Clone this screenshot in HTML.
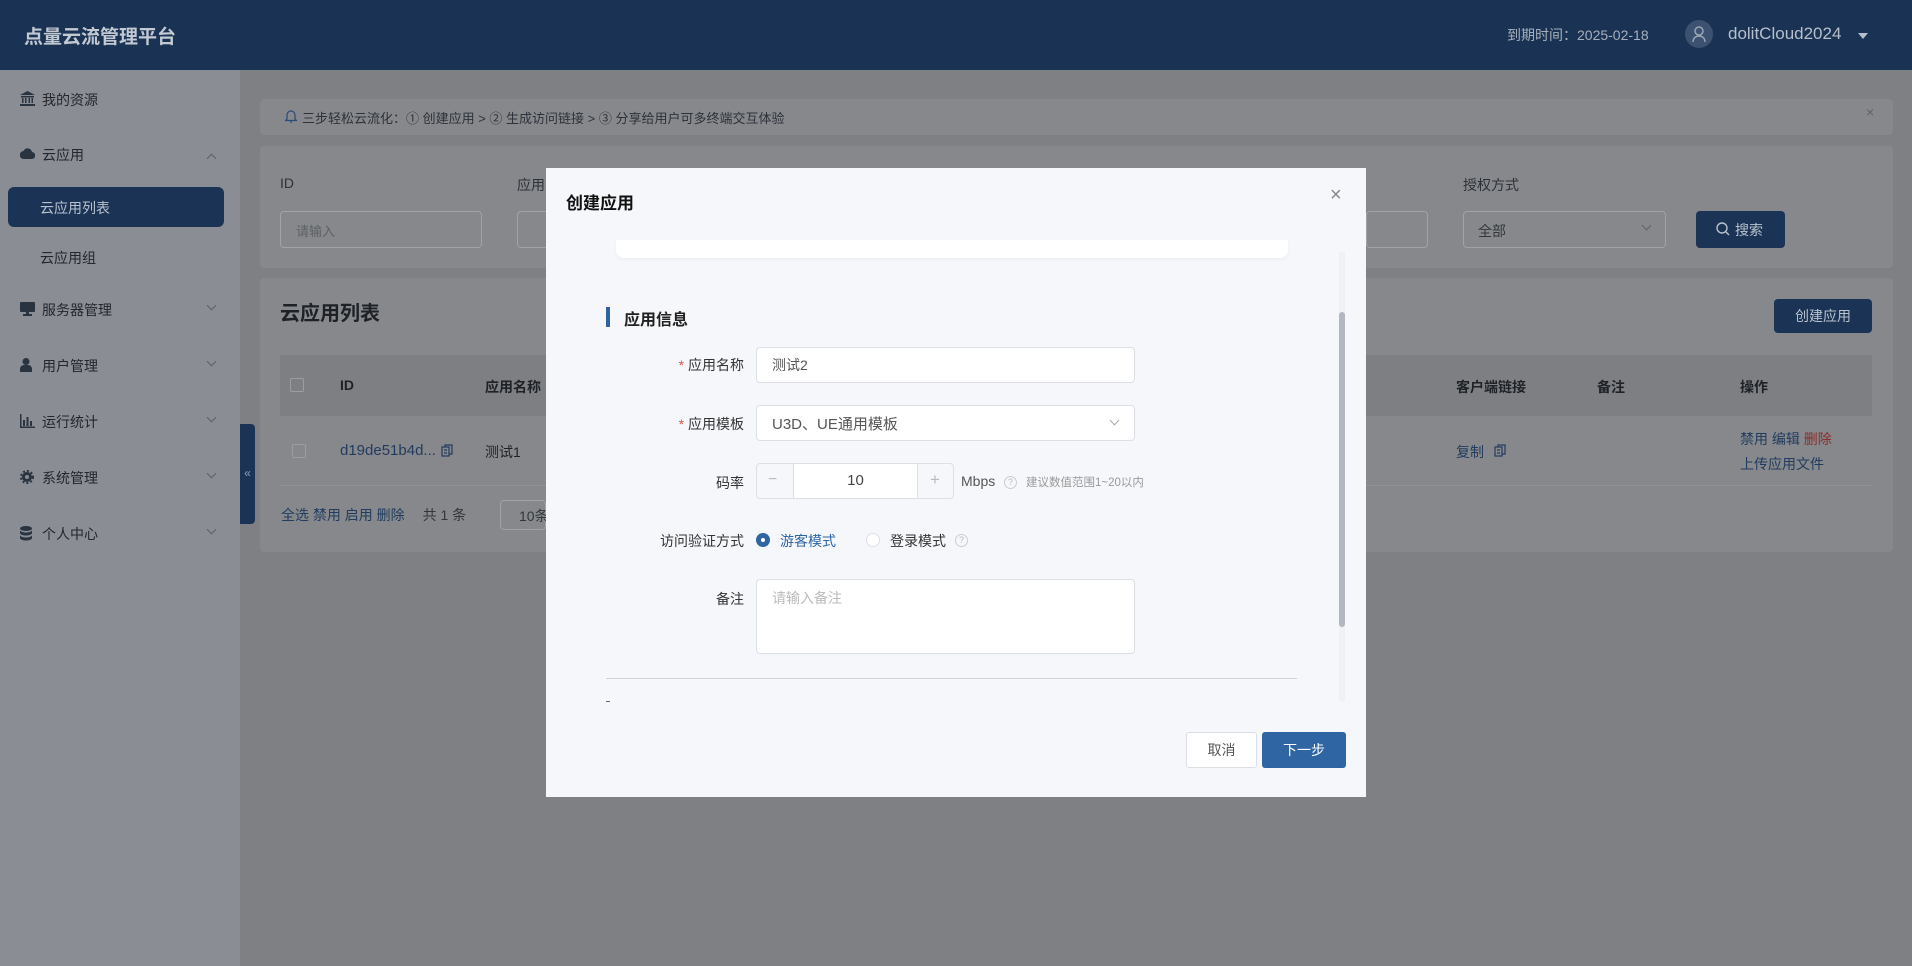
<!DOCTYPE html>
<html><head><meta charset="utf-8"><style>
*{box-sizing:border-box;margin:0;padding:0}
body{width:1912px;height:966px;overflow:hidden;background:#7e8083;font-family:"Liberation Sans","Noto Sans CJK SC",sans-serif;position:relative;font-size:14px;color:#2b2f35}
.a{position:absolute;white-space:nowrap}
.hdr{left:0;top:0;width:1912px;height:70px;background:#1a3354}
.side{left:0;top:70px;width:240px;height:896px;background:#8a8e94}
.card{background:#86888b;border-radius:4px}
.mi{left:42px;font-size:14px;color:#23272d}
.ic{position:absolute;left:20px}
.chev{left:208px;width:7px;height:7px;border-right:1px solid #5c6068;border-bottom:1px solid #5c6068;transform:rotate(45deg)}
.inp{border:1px solid #a0a3a7;border-radius:4px;background:#86888b}
.dlg{left:546px;top:168px;width:820px;height:629px;background:#f5f7fb}
.lbl{font-size:14px;color:#333;text-align:right;width:200px}
.fi{background:#fff;border:1px solid #dcdfe6;border-radius:4px}
</style></head><body>
<div class="a hdr"></div>
<div class="a" style="left:24px;top:22px;font-size:19px;font-weight:bold;color:#c3c9d2">点量云流管理平台</div>
<div class="a" style="left:1507px;top:25px;font-size:14px;color:#a6afbb">到期时间：2025-02-18</div>
<div class="a" style="left:1685px;top:20px;width:28px;height:28px;border-radius:50%;background:#3c5270"></div>
<svg class="a" style="left:1691px;top:25px" width="16" height="18" viewBox="0 0 16 18"><circle cx="8" cy="6" r="4" fill="none" stroke="#9aa6b6" stroke-width="1.5"/><path d="M2 17c0-4 3-6 6-6s6 2 6 6" fill="none" stroke="#9aa6b6" stroke-width="1.5"/></svg>
<div class="a" style="left:1728px;top:24px;font-size:17px;color:#b6bfcb">dolitCloud2024</div>
<div class="a" style="left:1858px;top:33px;border-left:5px solid transparent;border-right:5px solid transparent;border-top:6px solid #b6bfcb"></div>

<div class="a side"></div>
<svg class="ic" style="top:91px" width="15" height="15" viewBox="0 0 15 15" fill="#2a3340"><path d="M7.5 0L0 4h15z"/><rect x="1" y="5" width="13" height="1.5"/><rect x="2" y="7" width="1.5" height="5"/><rect x="5" y="7" width="1.5" height="5"/><rect x="8.5" y="7" width="1.5" height="5"/><rect x="11.5" y="7" width="1.5" height="5"/><rect x="0" y="13" width="15" height="2"/></svg>
<div class="a mi" style="top:90px">我的资源</div>
<svg class="ic" style="top:148px" width="15" height="11" viewBox="0 0 15 11" fill="#2a3340"><path d="M4 11a4 4 0 0 1-.5-8A4.5 4.5 0 0 1 12 4a3.5 3.5 0 0 1-.5 7z"/></svg>
<div class="a mi" style="top:145px">云应用</div>
<div class="a chev" style="top:155px;transform:rotate(225deg)"></div>
<div class="a" style="left:8px;top:187px;width:216px;height:40px;background:#1b3354;border-radius:6px"></div>
<div class="a" style="left:40px;top:198px;font-size:14px;color:#b9c2cf">云应用列表</div>
<div class="a" style="left:40px;top:248px;font-size:14px;color:#23272d">云应用组</div>
<svg class="ic" style="top:302px" width="15" height="14" viewBox="0 0 15 14" fill="#2a3340"><rect x="0" y="0" width="15" height="10" rx="1"/><rect x="6" y="10" width="3" height="2"/><rect x="3" y="12" width="9" height="2"/></svg>
<div class="a mi" style="top:300px">服务器管理</div><div class="a chev" style="top:302px"></div>
<svg class="ic" style="top:358px" width="12" height="14" viewBox="0 0 12 14" fill="#2a3340"><circle cx="6" cy="3.5" r="3.5"/><path d="M0 14v-3a4 4 0 0 1 4-4h4a4 4 0 0 1 4 4v3z"/></svg>
<div class="a mi" style="top:356px">用户管理</div><div class="a chev" style="top:358px"></div>
<svg class="ic" style="top:414px" width="15" height="14" viewBox="0 0 15 14" fill="#2a3340"><rect x="0" y="0" width="1.5" height="14"/><rect x="0" y="12.5" width="15" height="1.5"/><rect x="3" y="6" width="2" height="6"/><rect x="6.5" y="3" width="2" height="9"/><rect x="10" y="7" width="2" height="5"/></svg>
<div class="a mi" style="top:412px">运行统计</div><div class="a chev" style="top:414px"></div>
<svg class="ic" style="top:470px" width="14" height="14" viewBox="0 0 14 14"><circle cx="7" cy="7" r="5" fill="#2a3340"/><circle cx="7" cy="7" r="6" fill="none" stroke="#2a3340" stroke-width="2" stroke-dasharray="2 2"/><circle cx="7" cy="7" r="2" fill="#8a8e94"/></svg>
<div class="a mi" style="top:468px">系统管理</div><div class="a chev" style="top:470px"></div>
<svg class="ic" style="top:526px" width="12" height="15" viewBox="0 0 12 15" fill="#2a3340"><ellipse cx="6" cy="2.5" rx="6" ry="2.5"/><path d="M0 4v3c0 1.4 2.7 2.5 6 2.5S12 8.4 12 7V4c0 1.4-2.7 2.5-6 2.5S0 5.4 0 4zM0 9v3c0 1.4 2.7 2.5 6 2.5S12 13.4 12 12V9c0 1.4-2.7 2.5-6 2.5S0 10.4 0 9z"/></svg>
<div class="a mi" style="top:524px">个人中心</div><div class="a chev" style="top:526px"></div>
<div class="a" style="left:240px;top:424px;width:15px;height:100px;background:#1b3354;border-radius:0 4px 4px 0;color:#8fa0b8;font-size:12px;padding-top:42px;text-align:center">«</div>

<div class="a card" style="left:260px;top:99px;width:1633px;height:36px"></div>
<svg class="a" style="left:285px;top:109px" width="12" height="14" viewBox="0 0 12 14" fill="none" stroke="#2a4a78" stroke-width="1.2"><path d="M2 10V6a4 4 0 0 1 8 0v4l1.5 1.5h-11z"/><path d="M5 13h2"/></svg>
<div class="a" style="left:302px;top:108px;font-size:13px;color:#2d323a">三步轻松云流化：① 创建应用 &gt; ② 生成访问链接 &gt; ③ 分享给用户可多终端交互体验</div>
<div class="a" style="left:1866px;top:104px;color:#5f6368;font-size:14px">×</div>

<div class="a card" style="left:260px;top:146px;width:1633px;height:122px"></div>
<div class="a" style="left:280px;top:175px;color:#2d323a">ID</div>
<div class="a" style="left:517px;top:175px;color:#2d323a">应用</div>
<div class="a inp" style="left:280px;top:211px;width:202px;height:37px"></div>
<div class="a" style="left:296px;top:221px;color:#5d6166;font-size:13px">请输入</div>
<div class="a inp" style="left:517px;top:211px;width:40px;height:37px"></div>
<div class="a inp" style="left:1366px;top:211px;width:62px;height:37px"></div>
<div class="a" style="left:1463px;top:175px;color:#2d323a">授权方式</div>
<div class="a inp" style="left:1463px;top:211px;width:203px;height:37px"></div>
<div class="a" style="left:1478px;top:221px;color:#33373c;font-size:14px">全部</div>
<div class="a" style="left:1643px;top:222px;width:7px;height:7px;border-right:1px solid #5f6368;border-bottom:1px solid #5f6368;transform:rotate(45deg)"></div>
<div class="a" style="left:1696px;top:211px;width:89px;height:37px;background:#1b3354;border-radius:4px"></div>
<svg class="a" style="left:1716px;top:222px" width="14" height="14" viewBox="0 0 14 14" fill="none" stroke="#b9c2cf" stroke-width="1.4"><circle cx="6" cy="6" r="5"/><path d="M10 10l3 3"/></svg>
<div class="a" style="left:1735px;top:220px;color:#b9c2cf">搜索</div>

<div class="a card" style="left:260px;top:278px;width:1633px;height:274px"></div>
<div class="a" style="left:280px;top:297px;font-size:20px;font-weight:bold;color:#1e2227">云应用列表</div>
<div class="a" style="left:1774px;top:299px;width:98px;height:34px;background:#1b3354;border-radius:4px;color:#b9c2cf;text-align:center;line-height:34px">创建应用</div>
<div class="a" style="left:280px;top:355px;width:1592px;height:61px;background:#7d7f82"></div>
<div class="a" style="left:290px;top:378px;width:14px;height:14px;border:1px solid #9a9da1;border-radius:2px"></div>
<div class="a" style="left:340px;top:377px;font-weight:bold;color:#1e2227">ID</div>
<div class="a" style="left:485px;top:377px;font-weight:bold;color:#1e2227">应用名称</div>
<div class="a" style="left:1456px;top:377px;font-weight:bold;color:#1e2227">客户端链接</div>
<div class="a" style="left:1597px;top:377px;font-weight:bold;color:#1e2227">备注</div>
<div class="a" style="left:1740px;top:377px;font-weight:bold;color:#1e2227">操作</div>
<div class="a" style="left:292px;top:444px;width:14px;height:14px;border:1px solid #9a9da1;border-radius:2px"></div>
<div class="a" style="left:340px;top:442px;color:#223c60;font-size:15px">d19de51b4d...</div>
<svg class="a" style="left:441px;top:444px" width="12" height="13" viewBox="0 0 12 13" fill="none" stroke="#223c60" stroke-width="1.2"><rect x="1" y="3" width="7" height="9"/><path d="M4 3V1h7v9H8M3 6h3M3 9h3"/></svg>
<div class="a" style="left:485px;top:442px;color:#1e2227">测试1</div>
<div class="a" style="left:1456px;top:442px;color:#223c60">复制</div>
<svg class="a" style="left:1494px;top:444px" width="12" height="13" viewBox="0 0 12 13" fill="none" stroke="#223c60" stroke-width="1.2"><rect x="1" y="3" width="7" height="9"/><path d="M4 3V1h7v9H8M3 6h3M3 9h3"/></svg>
<div class="a" style="left:1740px;top:429px;color:#223c60">禁用 编辑 <span style="color:#8a2d2d">删除</span></div>
<div class="a" style="left:1740px;top:454px;color:#223c60">上传应用文件</div>
<div class="a" style="left:280px;top:485px;width:1592px;height:1px;background:#8f9195"></div>
<div class="a" style="left:281px;top:505px;color:#223c60">全选 禁用 启用 删除 <span style="color:#33373c;margin-left:14px">共 1 条</span></div>
<div class="a inp" style="left:500px;top:500px;width:46px;height:30px;padding:5px 18px;color:#33373c">10条</div>

<div class="a dlg"></div>
<div class="a" style="left:566px;top:189px;font-size:17px;font-weight:bold;color:#111">创建应用</div>
<div class="a" style="left:1330px;top:184px;font-size:20px;color:#888">×</div>
<div class="a" style="left:616px;top:240px;width:672px;height:18px;background:#fff;border-radius:0 0 8px 8px;box-shadow:0 2px 3px rgba(0,0,0,.04)"></div>
<div class="a" style="left:1339px;top:252px;width:6px;height:449px;background:#f0f1f4"></div>
<div class="a" style="left:1339px;top:312px;width:6px;height:315px;background:#b3b7c2;border-radius:3px"></div>
<div class="a" style="left:606px;top:307px;width:4px;height:20px;background:#2e64a0"></div>
<div class="a" style="left:624px;top:306px;font-size:16px;font-weight:bold;color:#222">应用信息</div>

<div class="a lbl" style="left:544px;top:355px"><span style="color:#d9534f">* </span>应用名称</div>
<div class="a fi" style="left:756px;top:347px;width:379px;height:36px"></div>
<div class="a" style="left:772px;top:355px;color:#555">测试2</div>
<div class="a lbl" style="left:544px;top:414px"><span style="color:#d9534f">* </span>应用模板</div>
<div class="a fi" style="left:756px;top:405px;width:379px;height:36px"></div>
<div class="a" style="left:772px;top:413px;color:#555;font-size:15px">U3D、UE通用模板</div>
<div class="a" style="left:1111px;top:417px;width:7px;height:7px;border-right:1px solid #aaa;border-bottom:1px solid #aaa;transform:rotate(45deg)"></div>
<div class="a lbl" style="left:544px;top:473px">码率</div>
<div class="a fi" style="left:756px;top:463px;width:198px;height:36px;background:#f5f7fa"></div>
<div class="a" style="left:793px;top:464px;width:125px;height:34px;background:#fff;border-left:1px solid #dcdfe6;border-right:1px solid #dcdfe6;text-align:center;line-height:34px;font-size:15px;color:#444">10</div>
<div class="a" style="left:768px;top:471px;color:#bbb;font-size:16px">−</div>
<div class="a" style="left:930px;top:470px;color:#bbb;font-size:17px">+</div>
<div class="a" style="left:961px;top:473px;color:#555;font-size:14px">Mbps</div>
<div class="a" style="left:1004px;top:476px;width:13px;height:13px;border:1px solid #ccc;border-radius:50%;font-size:9px;color:#bbb;text-align:center;line-height:11px">?</div>
<div class="a" style="left:1026px;top:474px;font-size:11.5px;color:#999">建议数值范围1~20以内</div>
<div class="a lbl" style="left:544px;top:531px">访问验证方式</div>
<div class="a" style="left:756px;top:533px;width:14px;height:14px;border-radius:50%;background:#2f65a3"><div style="margin:5px;width:4px;height:4px;background:#fff;border-radius:50%"></div></div>
<div class="a" style="left:780px;top:531px;color:#2f65a3">游客模式</div>
<div class="a" style="left:866px;top:533px;width:14px;height:14px;border-radius:50%;border:1px solid #dcdfe6;background:#fff"></div>
<div class="a" style="left:890px;top:531px;color:#333">登录模式</div>
<div class="a" style="left:955px;top:534px;width:13px;height:13px;border:1px solid #ccc;border-radius:50%;font-size:9px;color:#bbb;text-align:center;line-height:11px">?</div>
<div class="a lbl" style="left:544px;top:589px">备注</div>
<div class="a fi" style="left:756px;top:579px;width:379px;height:75px"></div>
<div class="a" style="left:772px;top:588px;color:#bbb;font-size:14px">请输入备注</div>
<div class="a" style="left:606px;top:678px;width:691px;height:1px;background:#cfd2d8"></div>
<div class="a" style="left:606px;top:701px;width:4px;height:1px;background:#666"></div>
<div class="a" style="left:1186px;top:732px;width:71px;height:36px;background:#fff;border:1px solid #dcdfe6;border-radius:3px;text-align:center;line-height:34px;color:#555">取消</div>
<div class="a" style="left:1262px;top:732px;width:84px;height:36px;background:#2f65a3;border-radius:3px;text-align:center;line-height:36px;color:#fff">下一步</div>
</body></html>
